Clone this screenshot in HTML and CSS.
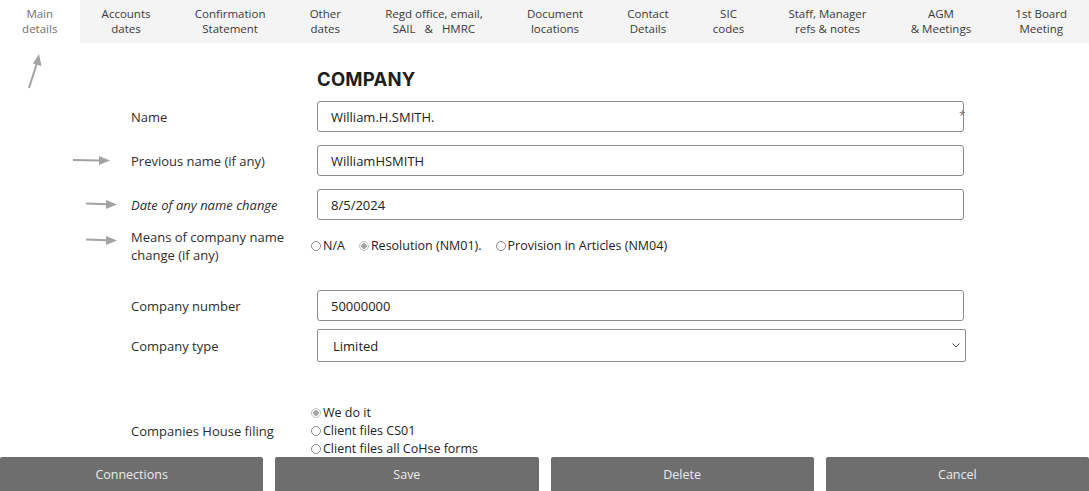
FILE: index.html
```html
<!DOCTYPE html>
<html lang="en">
<head>
<meta charset="utf-8">
<title>Company – Main details</title>
<link rel="stylesheet" href="styles.css">
</head>
<body>
<nav class="tabs">
  <a class="tab active">Main<br>details</a>
  <a class="tab">Accounts<br>dates</a>
  <a class="tab">Confirmation<br>Statement</a>
  <a class="tab">Other<br>dates</a>
  <a class="tab">Regd office, email,<br>SAIL &nbsp; &amp; &nbsp; HMRC</a>
  <a class="tab">Document<br>locations</a>
  <a class="tab">Contact<br>Details</a>
  <a class="tab">SIC<br>codes</a>
  <a class="tab">Staff, Manager<br>refs &amp; notes</a>
  <a class="tab">AGM<br>&amp; Meetings</a>
  <a class="tab">1st Board<br>Meeting</a>
</nav>

<main class="page">
  <svg class="note note-up" width="20" height="40" viewBox="0 0 20 40">
    <line x1="4" y1="37" x2="12" y2="12" stroke="#a3a3a3" stroke-width="2"/>
    <polygon points="14,3 16.5,15 8,12.5" fill="#a3a3a3"/>
  </svg>
  <svg class="note note-1" width="38" height="10" viewBox="0 0 38 10">
    <line x1="0" y1="5" x2="27" y2="5.5" stroke="#a3a3a3" stroke-width="2"/>
    <polygon points="26,1 37,5.5 26,10" fill="#a3a3a3"/>
  </svg>
  <svg class="note note-2" width="32" height="10" viewBox="0 0 32 10">
    <line x1="0" y1="4.5" x2="21" y2="5.2" stroke="#a3a3a3" stroke-width="2"/>
    <polygon points="20,1 31,5.5 20,10" fill="#a3a3a3"/>
  </svg>
  <svg class="note note-3" width="32" height="10" viewBox="0 0 32 10">
    <line x1="0" y1="4.5" x2="21" y2="5.2" stroke="#a3a3a3" stroke-width="2"/>
    <polygon points="20,1 31,5.5 20,10" fill="#a3a3a3"/>
  </svg>

  <h1 class="heading">COMPANY</h1>

  <div class="row row-name">
    <label class="label">Name</label>
    <input class="field" type="text" value="William.H.SMITH.">
    <span class="required">*</span>
  </div>
  <div class="row row-gap">
    <label class="label">Previous name (if any)</label>
    <input class="field" type="text" value="WilliamHSMITH">
  </div>
  <div class="row row-gap">
    <label class="label label-italic">Date of any name change</label>
    <input class="field" type="text" value="8/5/2024">
  </div>
  <div class="row row-means">
    <label class="label">Means of company name<br>change (if any)</label>
    <div class="radios-inline">
      <label class="opt"><input type="radio" name="means"><span>N/A</span></label>
      <label class="opt"><input type="radio" name="means" checked><span>Resolution (NM01).</span></label>
      <label class="opt"><input type="radio" name="means"><span>Provision in Articles (NM04)</span></label>
    </div>
  </div>
  <div class="row row-number">
    <label class="label">Company number</label>
    <input class="field" type="text" value="50000000">
  </div>
  <div class="row row-type">
    <label class="label">Company type</label>
    <select class="field select">
      <option>Limited</option>
    </select>
  </div>
  <div class="row row-filing">
    <label class="label">Companies House filing</label>
    <div class="radios-stack">
      <label class="opt"><input type="radio" name="filing" checked><span>We do it</span></label>
      <label class="opt"><input type="radio" name="filing"><span>Client files CS01</span></label>
      <label class="opt"><input type="radio" name="filing"><span>Client files all CoHse forms</span></label>
    </div>
  </div>
</main>

<footer class="actions">
  <button class="btn">Connections</button>
  <button class="btn">Save</button>
  <button class="btn">Delete</button>
  <button class="btn">Cancel</button>
</footer>
</body>
</html>
```

FILE: styles.css
```css
* { box-sizing: border-box; }

html, body {
  margin: 0;
  height: 100%;
}

body {
  display: flex;
  flex-direction: column;
  height: 491px;
  overflow: hidden;
  background: #ffffff;
  font-family: "Open Sans", "Liberation Sans", sans-serif;
  color: #2a2a2a;
}

/* ---------- tabs ---------- */
.tabs {
  display: flex;
  height: 43px;
  background: #f4f4f4;
  flex: 0 0 auto;
}

.tab {
  flex: 1 1 auto;
  display: flex;
  align-items: center;
  justify-content: center;
  text-align: center;
  font-size: 11.5px;
  line-height: 14.5px;
  color: #3a3a3a;
  padding: 0 4px;
  white-space: nowrap;
}

.tab.active {
  background: #ffffff;
  color: #707070;
}

/* ---------- form ---------- */
.page {
  position: relative;
  flex: 1 1 0;
  min-height: 0;
  padding-left: 131px;
}

.note { position: absolute; }
.note-up { left: 25px; top: 8px; }
.note-1 { left: 73px; top: 112px; }
.note-2 { left: 86px; top: 156px; }
.note-3 { left: 86px; top: 192px; }

.heading {
  margin: 24px 0 0 186px;
  font-family: "Inter", "Open Sans", sans-serif;
  font-weight: 700;
  font-size: 18.5px;
  line-height: 24px;
  letter-spacing: 0.2px;
  color: #1e1e1e;
}

.row {
  position: relative;
  display: grid;
  grid-template-columns: 186px 647px;
  align-items: center;
}

.row-name { margin-top: 10px; }
.row-gap { margin-top: 13px; }
.row-means { margin-top: 8px; }
.row-number { margin-top: 26px; }
.row-type { margin-top: 8px; grid-template-columns: 186px 649px; }
.row-filing { margin-top: 42px; }

.label {
  font-size: 13px;
  line-height: 18px;
  color: #2e2e2e;
}

.label-italic { font-style: italic; }

.field {
  height: 31px;
  width: 100%;
  border: 1px solid #8c8c8c;
  border-radius: 3px;
  padding: 0 13px;
  font-family: "Open Sans", "Liberation Sans", sans-serif;
  font-size: 13px;
  color: #222222;
  background: #ffffff;
  outline: none;
}

.select {
  height: 33px;
  border-radius: 2px;
  padding: 0 15px;
  appearance: none;
  -webkit-appearance: none;
  background-image: url("data:image/svg+xml;utf8,<svg xmlns='http://www.w3.org/2000/svg' width='8' height='5' viewBox='0 0 8 5'><polyline points='0.5,0.5 4,4 7.5,0.5' fill='none' stroke='%23555' stroke-width='1'/></svg>");
  background-repeat: no-repeat;
  background-position: right 5px center;
}

.required {
  position: absolute;
  left: 828px;
  top: 6px;
  font-size: 12px;
  color: #777777;
}

.radios-inline {
  display: flex;
  gap: 14px;
  margin-left: -6px;
}

.radios-stack {
  display: flex;
  flex-direction: column;
  margin-left: -6px;
}

.opt {
  display: flex;
  align-items: center;
  gap: 2px;
  font-size: 12.5px;
  line-height: 18px;
  color: #222222;
}

.opt input {
  appearance: none;
  -webkit-appearance: none;
  margin: 0;
  width: 10px;
  height: 10px;
  border: 1px solid #8a8a8a;
  border-radius: 50%;
  background: #ffffff;
}

.opt input:checked {
  border-color: #c2c2c2;
  background: radial-gradient(circle, #a6a6a6 0 2.6px, #ffffff 3px);
}

/* ---------- actions ---------- */
.actions {
  flex: 0 0 34px;
  display: grid;
  grid-template-columns: repeat(4, 1fr);
  gap: 12px;
}

.btn {
  border: none;
  border-radius: 2px 2px 0 0;
  background: #6e6e6e;
  color: #ececec;
  font-family: "Open Sans", "Liberation Sans", sans-serif;
  font-size: 12.5px;
  padding: 0;
}
```
